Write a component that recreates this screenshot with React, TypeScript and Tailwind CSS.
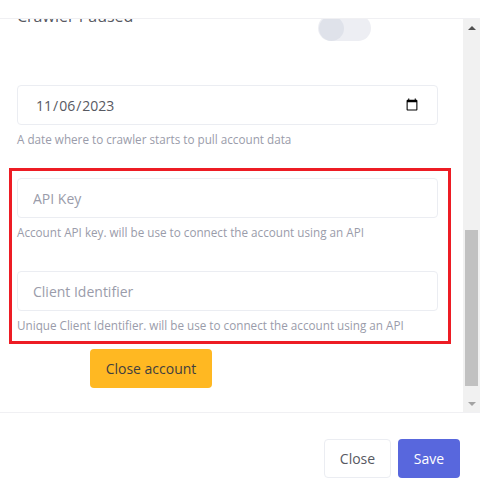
const font = { fontFamily: '"Open Sans", "Liberation Sans", sans-serif' };

const HelpText = ({ children }: { children: string }) => {
    return <div className="mt-[5px] text-[11.7px] leading-[18px] text-[#9a9caa]">{children}</div>;
};

const TextField = ({ placeholder }: { placeholder: string }) => {
    return (
        <input
            type="text"
            placeholder={placeholder}
            className="h-10 w-full rounded border border-[#ebedf2] bg-white px-[15px] text-[14px] text-[#575962] placeholder:text-[#9a9caa] outline-none"
        />
    );
};

const Scrollbar = () => {
    return (
        <div className="flex w-[17px] flex-col bg-[#f1f1f1]">
            <div className="flex h-[17px] items-center justify-center">
                <div className="h-0 w-0 border-x-[4px] border-b-[4px] border-x-transparent border-b-[#505050]" />
            </div>
            <div className="h-[194px]" />
            <div className="mx-[2px] h-[156px] bg-[#c1c1c1]" />
            <div className="flex-1" />
            <div className="flex h-[17px] items-center justify-center">
                <div className="h-0 w-0 border-x-[4px] border-t-[4px] border-x-transparent border-t-[#a3a3a3]" />
            </div>
        </div>
    );
};

export default function App() {
    return (
        <div className="flex h-[496px] w-[480px] flex-col bg-white text-[#575962]" style={font}>
            <div className="h-[19px] shrink-0 border-b border-[#f0f0f3]" />
            <div className="flex h-[393px] shrink-0">
                <div className="flex-1 overflow-hidden pl-[17px] pr-[25px]">
                    <div className="-mt-[15px]">
                        <div className="flex items-start">
                            <div className="w-[301px] text-[16px] leading-6 text-[#575962]">Crawler Paused</div>
                            <div className="mt-[11px] flex h-[26px] w-[53px] items-center rounded-full bg-[#edeef3] px-px">
                                <div className="h-[25px] w-[25px] rounded-full bg-[#dfe2ea]" />
                            </div>
                        </div>
                        <input
                            type="date"
                            defaultValue="2023-11-06"
                            className="mt-[44px] h-10 w-full rounded border border-[#ebedf2] bg-white pl-[17px] pr-4 text-[14px] text-[#575962] outline-none"
                        />
                        <HelpText>A date where to crawler starts to pull account data</HelpText>
                        <div className="mt-[20px] -ml-[8px] w-[442px] border-[3px] border-[#ed1c24] pt-[7px] pb-[7px] pl-[5px] pr-[10px]">
                            <TextField placeholder="API Key" />
                            <HelpText>Account API key. will be use to connect the account using an API</HelpText>
                            <div className="mt-[30px]">
                                <TextField placeholder="Client Identifier" />
                            </div>
                            <HelpText>Unique Client Identifier. will be use to connect the account using an API</HelpText>
                        </div>
                        <button className="mt-[5px] ml-[73px] h-[39px] w-[122px] rounded bg-[#ffb822] text-[14px] text-[#3f3f3f]">
                            Close account
                        </button>
                    </div>
                </div>
                <Scrollbar />
            </div>
            <div className="flex flex-1 items-start justify-end gap-[7px] border-t border-[#f0f0f3] pr-[20px] pt-[26px]">
                <button className="h-[39px] w-[67px] rounded border border-[#ebedf2] bg-white text-[14px] text-[#575962]">
                    Close
                </button>
                <button className="h-[39px] w-[62px] rounded bg-[#5867dd] text-[14px] text-white">
                    Save
                </button>
            </div>
        </div>
    );
}
